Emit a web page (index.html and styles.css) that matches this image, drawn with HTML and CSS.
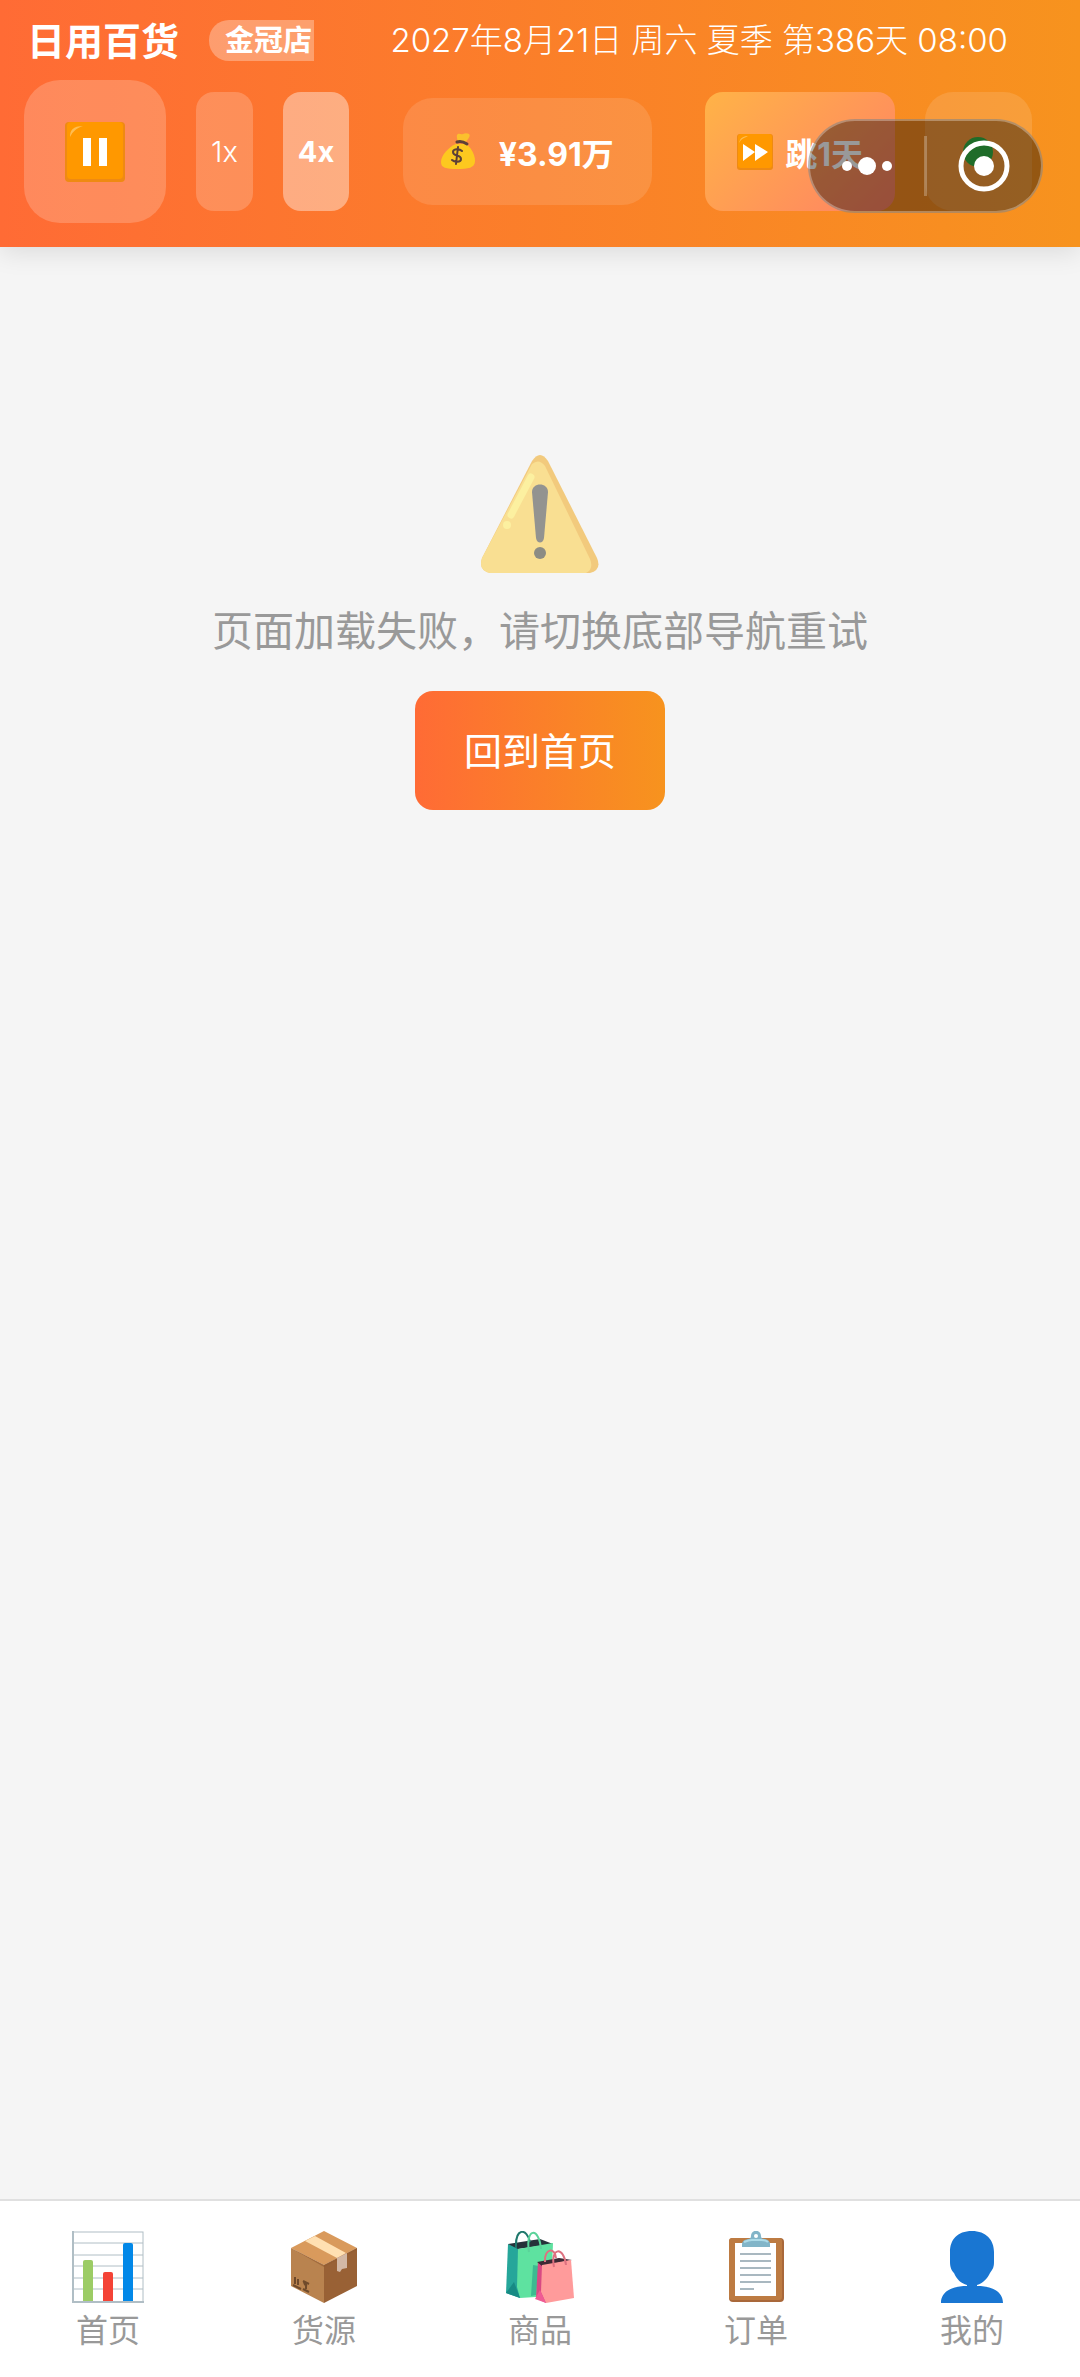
FILE: index.html
```html
<!DOCTYPE html>
<html lang="zh-CN">

<head>
    <meta charset="UTF-8">
    <meta name="viewport" content="width=device-width, initial-scale=1">
    <title>日用百货</title>
    <link rel="stylesheet" href="styles.css">
</head>

<body>
    <header class="header">
        <div class="shop-row">
            <div class="shop">
                <h1 class="shop-name">日用百货</h1>
                <span class="shop-level">金冠店</span>
            </div>
            <div class="date">2027年8月21日 周六 夏季 第386天 08:00</div>
        </div>

        <div class="control-row">
            <div class="controls">
                <button class="btn-pause" type="button" aria-label="暂停">
                    <svg class="icon-pause" viewBox="0 0 60 60">
                        <rect width="60" height="60" rx="4" fill="#ef8a12" />
                        <rect x="2" width="56" height="57" rx="4" fill="#ff9800" />
                        <path d="M5 15C5 8 8 4 18 4C12 6 8 9 5 15Z" fill="#ffbd52" />
                        <path d="M18 16h8v28h-8zM34 16h8v28h-8z" fill="#fff" />
                    </svg>
                </button>
                <button class="btn-speed" type="button">1x</button>
                <button class="btn-speed active" type="button">4x</button>
            </div>

            <div class="money">
                <svg class="icon-money" viewBox="0 0 34 37">
                    <path d="M17 9C16 5 15 2 17 1c2-1 3 1 5 0s4-1 6 0c2 2-1 5-4 9Z" fill="#fbc02d" />
                    <path d="M15 11C8 14 0 22 0 29c0 6 5 7 16 7s18-1 18-8c0-8-5-14-9-17Z" fill="#fdc81f" />
                    <path d="M16 9c3-1 7 0 10 2" fill="none" stroke="#5d4037" stroke-width="3" stroke-linecap="round" />
                    <path d="M21 18c-3-3-9-2-9 1 0 5 8 2 8 7 0 4-7 3-9 1M17 14l-2 17" fill="none" stroke="#5d4037"
                        stroke-width="2" stroke-linecap="round" />
                </svg>
                <span>¥3.91万</span>
            </div>

            <div class="controls">
                <button class="btn-skip" type="button">
                    <svg class="icon-skip" viewBox="0 0 36 36">
                        <rect width="36" height="36" rx="3" fill="#ef8a12" />
                        <rect x="1" width="34" height="34" rx="3" fill="#ff9800" />
                        <path d="M2 9C3 4 6 2 11 2C7 4 4 5 2 9Z" fill="#ffbd52" />
                        <path d="M6 10l12 8-12 9zM18 10l13 8-13 9z" fill="#fff" />
                    </svg>
                    <span>跳1天</span>
                </button>
                <button class="btn-status" type="button" aria-label="状态">
                    <svg class="icon-status" viewBox="0 0 30 30">
                        <circle cx="15" cy="15" r="15" fill="#34b545" />
                    </svg>
                </button>
            </div>
        </div>

        <!-- host app menu, floats above the page -->
        <div class="capsule">
            <button class="capsule-btn" type="button" aria-label="更多">
                <svg class="icon-more" viewBox="0 0 50 18">
                    <g fill="#fff">
                        <circle cx="5" cy="9" r="5" />
                        <circle cx="25" cy="9" r="9" />
                        <circle cx="45" cy="9" r="5" />
                    </g>
                </svg>
            </button>
            <span class="capsule-line"></span>
            <button class="capsule-btn" type="button" aria-label="关闭">
                <svg class="icon-close" viewBox="0 0 52 52">
                    <circle cx="26" cy="26" r="23" fill="none" stroke="#fff" stroke-width="5" />
                    <circle cx="26" cy="26" r="10" fill="#fff" />
                </svg>
            </button>
        </div>
    </header>

    <main class="content">
        <svg class="icon-warning" viewBox="0 0 118 118">
            <path d="M51 6Q59-6 67 6L116 103Q121 115 109 118H9Q-3 115 1 103Z" fill="#f2ca7d" />
            <path d="M51 9Q58 3 64 11L109 104Q113 114 105 118H9Q-3 115 1 103Z" fill="#f9df92" />
            <path d="M50 22L30 60" stroke="#fcf0a0" stroke-width="7" stroke-linecap="round" />
            <circle cx="26" cy="70" r="4" fill="#fcf0a0" />
            <path d="M51 37C51 27 67 27 67 37L63 83C62 89 56 89 55 83Z" fill="#939390" />
            <circle cx="59" cy="98" r="6" fill="#8c8c84" />
        </svg>
        <p class="message">页面加载失败，请切换底部导航重试</p>
        <button class="btn-home" type="button">回到首页</button>
    </main>

    <nav class="tabbar">
        <a class="tab" href="#home">
            <svg class="tab-icon" viewBox="0 0 72 72">
                <rect x="1" y="1" width="70" height="70" fill="#fff" stroke="#b0bec5" stroke-width="1" />
                <path d="M1 12h70M1 24h70M1 35h70M1 47h70M1 58h70" stroke="#b0bec5" stroke-width="1" />
                <path d="M1 0v71h71" fill="none" stroke="#b0bec5" stroke-width="2" />
                <path d="M11 70V31q0-2 2-2h6q2 0 2 2v39z" fill="#9ccc65" />
                <path d="M31 70V43q0-2 2-2h6q2 0 2 2v27z" fill="#f44336" />
                <path d="M51 70V14q0-2 2-2h6q2 0 2 2v56z" fill="#0288e8" />
            </svg>
            <span>首页</span>
        </a>
        <a class="tab" href="#supply">
            <svg class="tab-icon" viewBox="0 0 72 72">
                <path d="M36 0L69 17 36 34 3 17Z" fill="#d99a5c" />
                <path d="M3 17L36 34V72L3 55Z" fill="#b9834f" />
                <path d="M69 17L36 34V72L69 55Z" fill="#996135" />
                <path d="M3 17L36 34 69 17V19L36 36Z" fill="#935b31" opacity=".6" />
                <path d="M27 5L58 22 49 27 17 10Z" fill="#ffe0b2" />
                <path d="M49 27L59 22V37L54 38 52 41 49 40Z" fill="#d3b8a5" />
                <path d="M7 46v7M10 48v6M5 54l8 4M15 50l6 3M16 51q1 4 3 3M18 53v5M15 58l6 3" fill="none"
                    stroke="#6f4a2b" stroke-width="2" />
            </svg>
            <span>货源</span>
        </a>
        <a class="tab" href="#goods">
            <svg class="tab-icon" viewBox="0 0 72 72">
                <path d="M4 13L14 15 16 67 2 62Z" fill="#26a69a" />
                <path d="M4 13L36 8 49 13 14 18Z" fill="#26323a" />
                <path d="M14 18L49 12 47 65 16 67 13 56Z" fill="#5ee2a0" />
                <path d="M10 51L16 67 2 62Z" fill="#178a84" />
                <path d="M29 34l6 1-3 29-5 1Z" fill="#3dbb91" />
                <path d="M12 17C11-4 23-3 26 11" fill="none" stroke="#1f786c" stroke-width="2" />
                <path d="M25 21C21-3 35-5 37 18" fill="none" stroke="#5bd39a" stroke-width="2" />
                <path d="M34 31L38 33 42 72 32 67Z" fill="#d84a83" />
                <path d="M33 31L55 27 68 29 38 35Z" fill="#3d2834" />
                <path d="M38 34L67 29 70 67 42 72 37 61Z" fill="#ff9b9b" />
                <path d="M36 59L42 72 31 68Z" fill="#ef5b94" />
                <path d="M41 31C40 17 51 16 52 27M50 36C46 16 60 15 62 34" fill="none" stroke="#dd7180"
                    stroke-width="2" />
            </svg>
            <span>商品</span>
        </a>
        <a class="tab" href="#orders">
            <svg class="tab-icon" viewBox="0 0 72 72">
                <rect x="9" y="7" width="55" height="64" rx="4" fill="#a9683a" />
                <rect x="9" y="7" width="53" height="62" rx="3" fill="#bd7b42" />
                <path d="M15 12h41v53H15z" fill="#fff" />
                <path d="M20 23h31M20 30h31M20 37h31M20 44h31M20 51h31M20 58h14" stroke="#a9b8c0" stroke-width="2" />
                <path d="M22 16V13Q22 9 28 8Q31 8 31 5C31-2 41-2 41 5Q41 8 45 8Q50 9 50 13V16Z" fill="#82b5c8" />
                <path d="M24 11q5-2 8-2h9q5 0 7 2" fill="none" stroke="#addbe8" stroke-width="2" />
                <circle cx="36" cy="5" r="2" fill="#fff" />
            </svg>
            <span>订单</span>
        </a>
        <a class="tab" href="#mine">
            <svg class="tab-icon" viewBox="0 0 72 72">
                <path d="M36 0C21 0 14 9 14 21V31C14 37 16 40 18 42C21 49 25 52 31 54V55C17 55 5 60 5 72H67C67 60 55 55 41 55V54C47 52 51 48 54 42C57 38 58 36 58 31V21C58 9 50 0 36 0Z"
                    fill="#1976d2" />
            </svg>
            <span>我的</span>
        </a>
    </nav>
</body>

</html>
```
FILE: styles.css
```css
* {
    box-sizing: border-box;
}

body {
    margin: 0;
    min-height: 100vh;
    display: flex;
    flex-direction: column;
    background: #f5f5f5;
    font-family: Inter, "Noto Sans CJK SC", sans-serif;
}

button {
    border: none;
    padding: 0;
    color: #fff;
    font-family: inherit;
    font-weight: inherit;
    cursor: pointer;
}

svg {
    display: block;
    flex-shrink: 0;
}

.header {
    position: relative;
    padding: 12px 48px 24px 24px;
    background: linear-gradient(90deg, #ff6b35, #f7931e);
    box-shadow: 0 6px 24px rgba(0, 0, 0, 0.1);
    color: #fff;
}

.shop-row,
.control-row,
.shop,
.controls {
    display: flex;
    align-items: center;
}

.shop-row,
.control-row {
    justify-content: space-between;
}

.shop-row {
    height: 56px;
    margin-bottom: 12px;
    padding-right: 24px;
    white-space: nowrap;
}

.shop {
    gap: 30px;
}

.shop-name {
    margin: 0;
    padding: 0 0 4px 3px;
    font-size: 38px;
    font-weight: bold;
}

.shop-level {
    height: 41px;
    padding: 0 2px 0 16px;
    border-radius: 20px 0 0 20px;
    background: rgba(255, 255, 255, 0.3);
    font-size: 29px;
    font-weight: bold;
    line-height: 41px;
}

.date {
    padding-bottom: 4px;
    font-size: 33px;
    font-weight: 300;
}

.controls {
    gap: 30px;
}

.btn-pause,
.btn-speed,
.btn-skip,
.btn-status,
.money {
    display: flex;
    align-items: center;
    justify-content: center;
}

.btn-pause {
    width: 142px;
    height: 143px;
    border-radius: 36px;
    background: rgba(255, 255, 255, 0.2);
}

.icon-pause {
    width: 60px;
    height: 60px;
}

.btn-speed {
    height: 119px;
    padding: 0 15px;
    border-radius: 18px;
    background: rgba(255, 255, 255, 0.2);
    font-size: 29px;
    font-weight: 300;
}

.btn-speed.active {
    background: rgba(255, 255, 255, 0.4);
    font-weight: bold;
}

.money {
    height: 107px;
    padding: 0 38px;
    gap: 24px;
    border-radius: 30px;
    background: rgba(255, 255, 255, 0.12);
    font-size: 32px;
    font-weight: bold;
}

.icon-money {
    width: 34px;
    height: 37px;
}

.btn-skip {
    height: 119px;
    padding: 0 32px;
    gap: 12px;
    border-radius: 18px;
    background: linear-gradient(135deg, #ffb347, #ff8264);
    font-size: 32px;
    font-weight: bold;
}

.icon-skip {
    width: 36px;
    height: 36px;
}

.btn-status {
    width: 107px;
    height: 119px;
    border-radius: 28px;
    background: rgba(255, 255, 255, 0.12);
}

.icon-status {
    width: 30px;
    height: 30px;
}

.capsule {
    position: absolute;
    top: 119px;
    right: 37px;
    width: 235px;
    height: 94px;
    display: flex;
    align-items: center;
    border: 2px solid rgba(255, 255, 255, 0.3);
    border-radius: 47px;
    background: rgba(0, 0, 0, 0.4);
}

.capsule-btn {
    flex: 1;
    display: flex;
    justify-content: center;
    background: none;
}

.capsule-line {
    width: 3px;
    height: 60px;
    background: rgba(255, 255, 255, 0.25);
}

.icon-more {
    width: 50px;
    height: 18px;
}

.icon-close {
    width: 52px;
    height: 52px;
}

.content {
    flex: 1;
    display: flex;
    flex-direction: column;
    align-items: center;
    padding-top: 208px;
}

.icon-warning {
    width: 118px;
    height: 118px;
}

.message {
    margin: 28px 0 30px;
    color: #999;
    font-size: 41px;
    line-height: 60px;
}

.btn-home {
    height: 119px;
    padding: 0 49px 4px;
    border-radius: 18px;
    background: linear-gradient(90deg, #ff6b35, #f7931e);
    font-size: 38px;
}

.tabbar {
    display: flex;
    height: 178px;
    border-top: 2px solid #e0e0e0;
    background: #fff;
}

.tab {
    flex: 1;
    display: flex;
    flex-direction: column;
    align-items: center;
    padding-top: 30px;
    gap: 6px;
    color: #999;
    font-size: 32px;
    line-height: 44px;
    text-decoration: none;
}

.tab-icon {
    width: 72px;
    height: 72px;
}
```
